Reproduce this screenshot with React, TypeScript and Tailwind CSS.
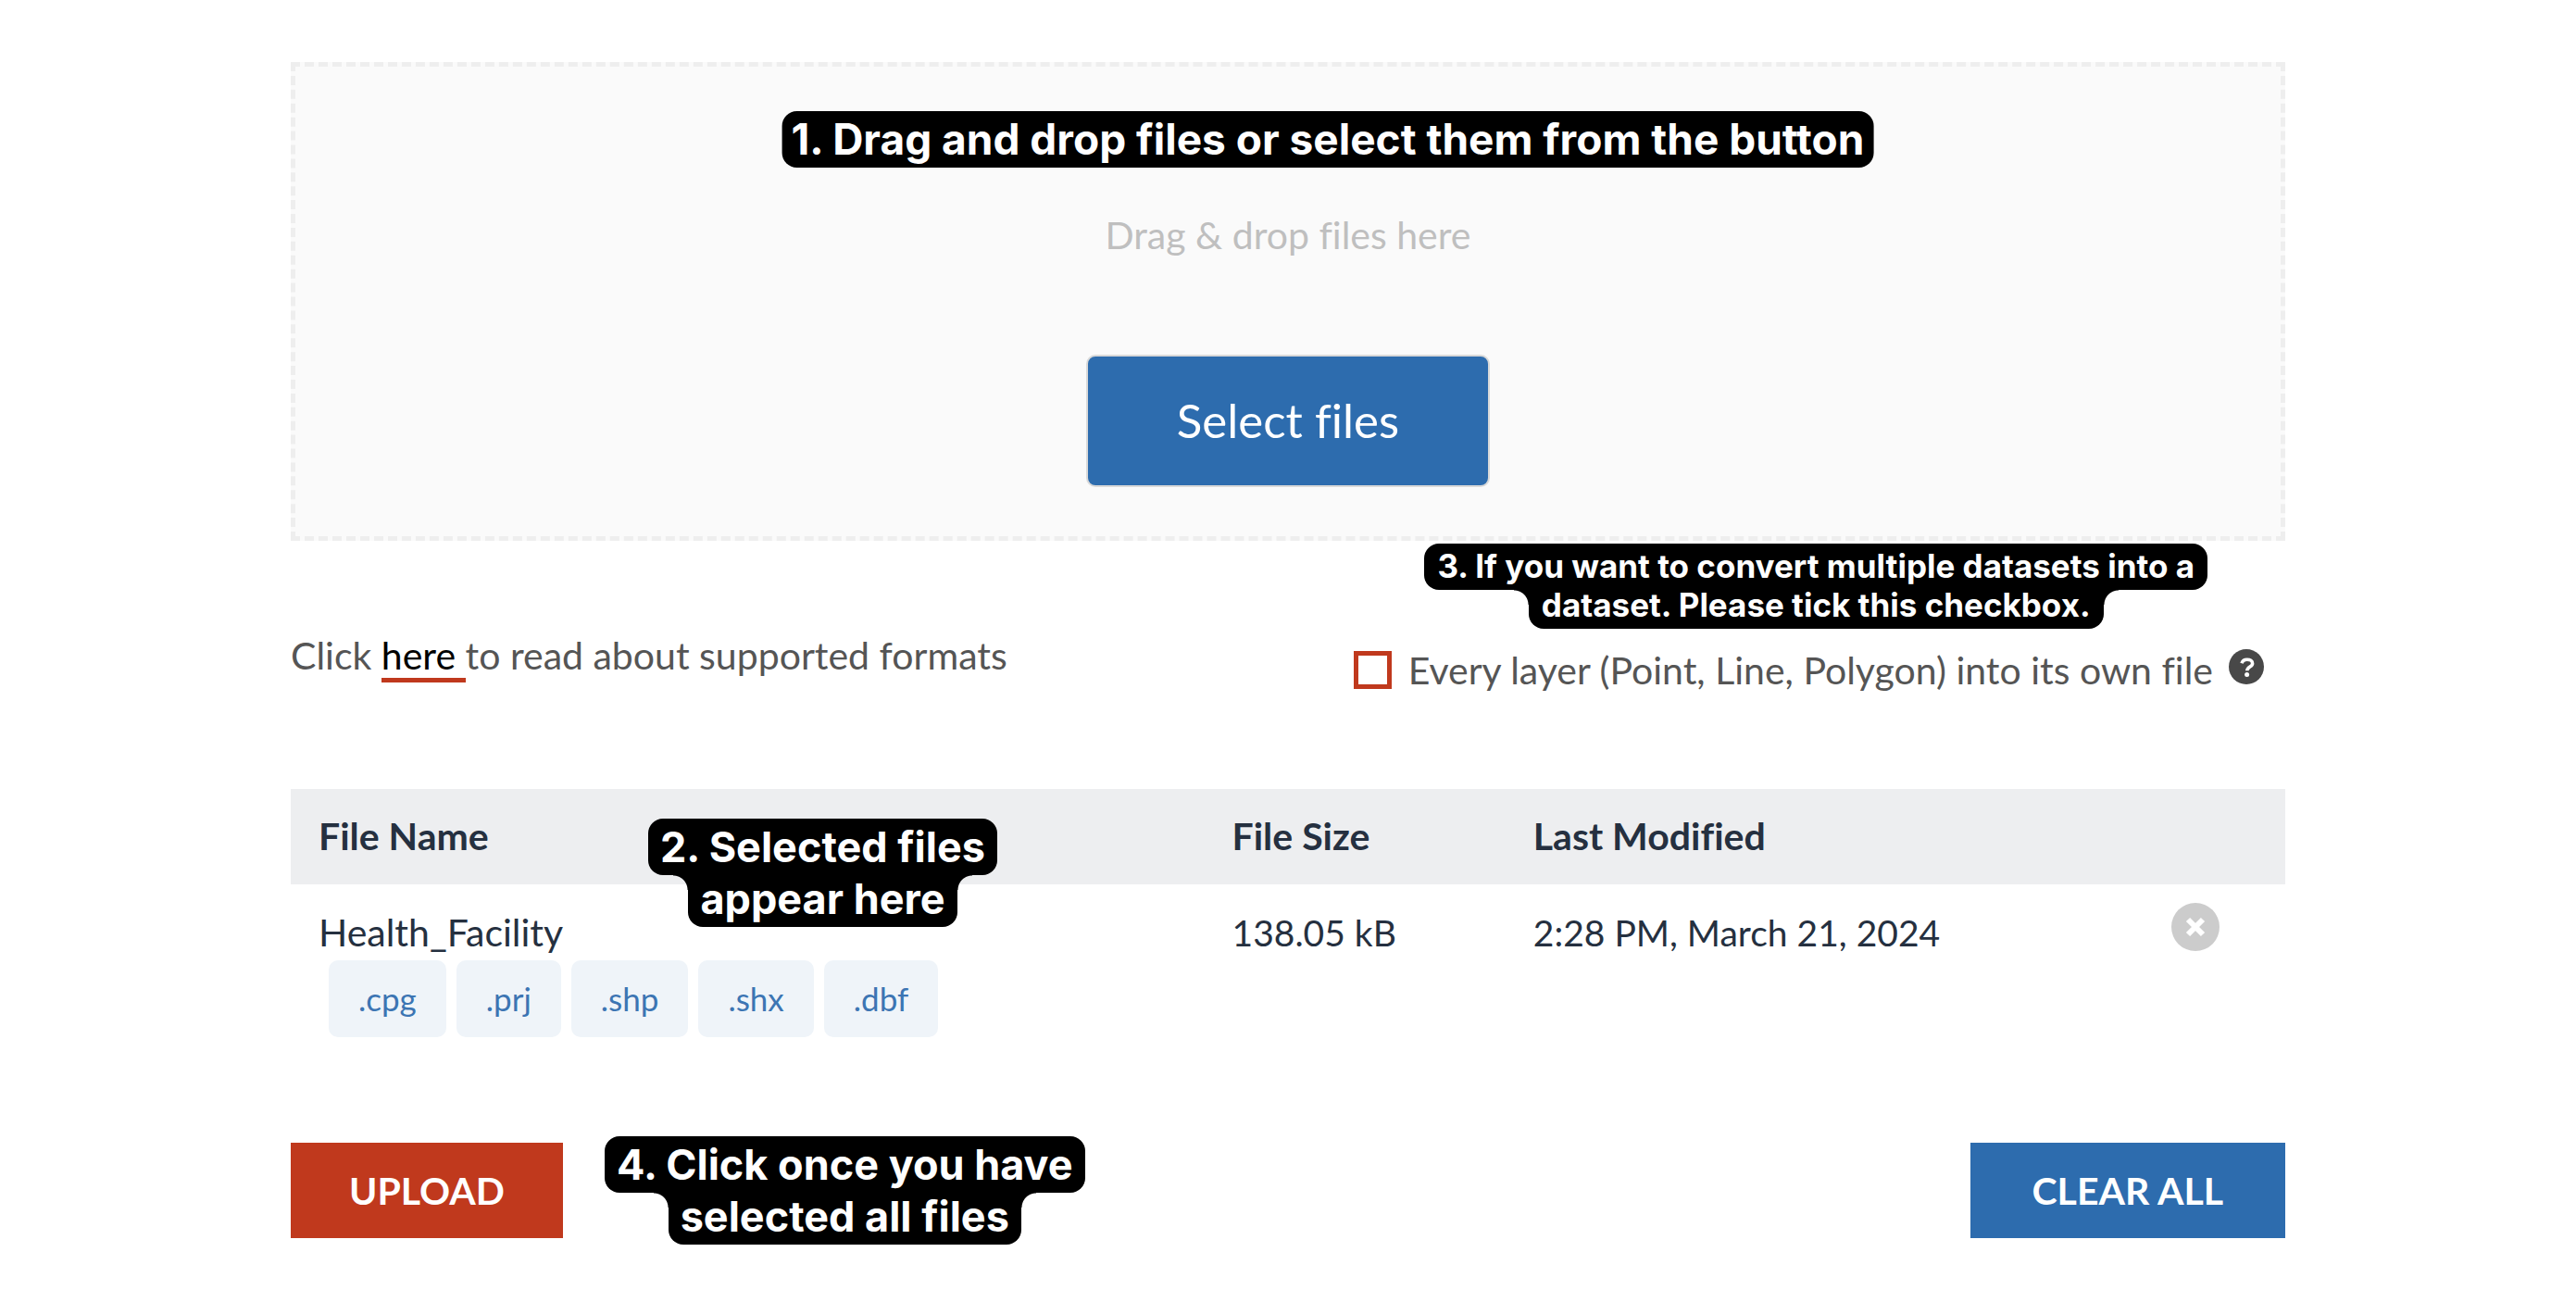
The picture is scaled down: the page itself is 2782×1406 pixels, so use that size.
import React from 'react';

const extensions = ['.cpg', '.prj', '.shp', '.shx', '.dbf'];

type CalloutProps = {
  lines: string[];
  size?: 'xl' | 'lg' | 'sm';
  className?: string;
};

const lineStyles = {
  xl: 'px-[10px] pt-px pb-px text-[46px] leading-[59px]',
  lg: 'px-[13px] pt-px pb-px text-[45px] leading-[59px]',
  sm: 'px-[14px] pb-[2px] text-[35px] leading-[48px]',
};

const overlapStyles = {
  xl: '-mt-[5px]',
  lg: '-mt-[5px]',
  sm: '-mt-[8px]',
};

const notchStyles = {
  xl: 'top-[5px]',
  lg: 'top-[5px]',
  sm: 'top-[8px]',
};

function Callout({ lines, size = 'lg', className = '' }: CalloutProps) {
  return (
    <div
      className={`flex flex-col items-center whitespace-nowrap font-[Inter,sans-serif] font-bold text-white ${className}`}
    >
      {lines.map((line, i) => (
        <div
          key={line}
          className={`relative bg-black ${lineStyles[size]} ${i === 0 ? 'z-10 rounded-[16px]' : 'rounded-b-[16px]'} ${i === 0 ? '' : overlapStyles[size]}`}
        >
          {i > 0 && (
            <>
              <span
                className={`absolute right-full size-4 bg-[radial-gradient(circle_at_0_100%,transparent_15px,#000_16px)] ${notchStyles[size]}`}
              />
              <span
                className={`absolute left-full size-4 bg-[radial-gradient(circle_at_100%_100%,transparent_15px,#000_16px)] ${notchStyles[size]}`}
              />
            </>
          )}
          {line}
        </div>
      ))}
    </div>
  );
}

function DropZone() {
  return (
    <section className="relative flex flex-col items-center border-5 border-dashed border-[#eeeeee] bg-[#fafafa] pt-[158px] pb-[53px]">
      <Callout
        size="xl"
        lines={['1. Drag and drop files or select them from the button']}
        className="absolute top-12 left-[52%] -translate-x-1/2"
      />
      <p className="text-[#bfbfbf]">Drag &amp; drop files here</p>
      <button
        type="button"
        className="mt-[105px] rounded-[10px] border-2 border-[#d9d9d9] bg-[#2d6cae] px-24 pt-[38px] pb-[40px] text-[51px] leading-[61px] text-white"
      >
        Select files
      </button>
    </section>
  );
}

function Options() {
  return (
    <section className="relative mt-[100px] flex items-start justify-between text-[#555555]">
      <p>
        Click{' '}
        <a href="#formats" className="border-b-5 border-[#c0391d] text-black">
          here{' '}
        </a>
        to read about supported formats
      </p>
      <Callout
        size="sm"
        lines={['3. If you want to convert multiple datasets into a', 'dataset. Please tick this checkbox.']}
        className="absolute right-[84px] bottom-[69px]"
      />
      <div className="mt-4 flex items-start pr-[23px]">
        <input
          id="split-layers"
          type="checkbox"
          className="mt-[3px] size-[41px] appearance-none border-5 border-[#c0391d] bg-white checked:bg-[#c0391d]"
        />
        <label htmlFor="split-layers" className="ml-[18px]">
          Every layer (Point, Line, Polygon) into its own file
        </label>
        <button type="button" aria-label="Help" className="mt-px ml-[17px]">
          <svg viewBox="0 0 38 38" className="size-[38px]" fill="none">
            <circle cx="19" cy="19" r="19" fill="#484848" />
            <path
              d="M14 15.2C14.8 12.4 16.8 11.2 19.8 11.2C23 11.2 25.6 12.8 25.6 15.4C25.6 19.2 19.8 18.8 19.8 23.2"
              stroke="#fff"
              strokeWidth="3.6"
            />
            <circle cx="19.6" cy="27.6" r="2.5" fill="#fff" />
          </svg>
        </button>
      </div>
    </section>
  );
}

function FileTable() {
  return (
    <section className="relative mt-[104px]">
      <table className="w-full table-fixed text-left text-[#253040]">
        <thead className="bg-[#edeef0]">
          <tr>
            <th className="w-[45.8%] pt-[27px] pb-[28px] pl-[30px]">File Name</th>
            <th className="w-[15.1%] pt-[27px] pb-[28px] pl-[30px]">File Size</th>
            <th className="pt-[27px] pb-[28px] pl-[30px]">Last Modified</th>
            <th className="w-[10%]" aria-label="Remove" />
          </tr>
        </thead>
        <tbody>
          <tr className="align-top">
            <td className="pt-7 pl-[30px]">
              Health_Facility
              <ul className="mt-[6px] ml-[11px] flex gap-[11px]">
                {extensions.map((ext) => (
                  <li
                    key={ext}
                    className="rounded-[10px] bg-[#eff4f9] px-8 text-[35px] leading-[83px] text-[#3c75b3]"
                  >
                    {ext}
                  </li>
                ))}
              </ul>
            </td>
            <td className="pt-7 pl-[30px] text-[39px]">138.05 kB</td>
            <td className="pt-7 pl-[30px] text-[39px]">2:28 PM, March 21, 2024</td>
            <td className="pt-5 pr-[71px]">
              <button type="button" aria-label="Remove Health_Facility" className="ml-auto block">
                <svg viewBox="0 0 52 52" className="size-[52px]">
                  <circle cx="26" cy="26" r="26" fill="#cccccc" />
                  <path d="M18 18l16 16M34 18l-16 16" stroke="#fff" strokeWidth="6" />
                </svg>
              </button>
            </td>
          </tr>
        </tbody>
      </table>
      <Callout lines={['2. Selected files', 'appear here']} className="absolute top-8 left-[386px]" />
    </section>
  );
}

function Actions() {
  return (
    <section className="mt-[107px] flex items-center">
      <button type="button" className="bg-[#c0391d] px-[63px] leading-[103px] font-bold text-white">
        UPLOAD
      </button>
      <Callout lines={['4. Click once you have', 'selected all files']} className="ml-[45px]" />
      <button type="button" className="ml-auto bg-[#2d6cae] px-[67px] leading-[103px] font-bold text-white">
        CLEAR ALL
      </button>
    </section>
  );
}

export default function App() {
  return (
    <main className="min-h-screen bg-white px-8 pt-[67px] pb-[60px] font-[Lato,sans-serif] text-[41px] leading-[48px] [font-variant-ligatures:none]">
      <div className="mx-auto w-full max-w-[2154px]">
        <DropZone />
        <Options />
        <FileTable />
        <Actions />
      </div>
    </main>
  );
}
